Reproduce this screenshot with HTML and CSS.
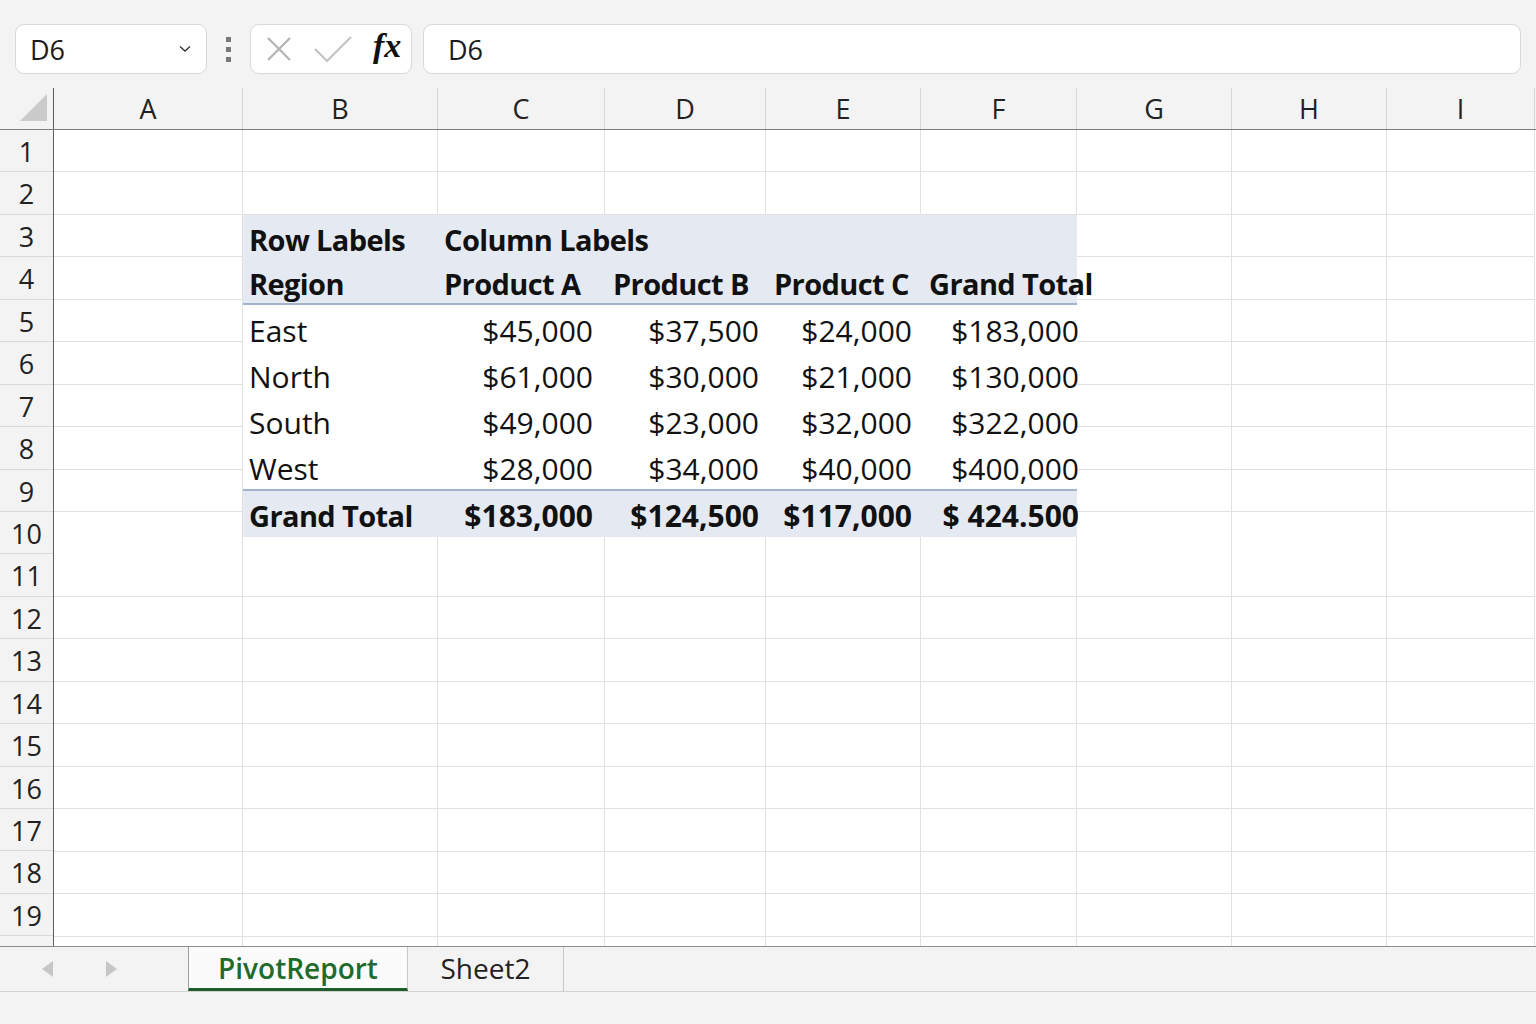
FILE: index.html
```html
<!DOCTYPE html>
<html lang="en">
<head>
  <meta charset="UTF-8">
  <title>PivotReport</title>
  <link rel="stylesheet" href="styles.css">
</head>
<body>
  <div class="toolbar">
    <div class="namebox">
      <span>D6</span>
      <svg class="chev" width="14" height="8" viewBox="0 0 14 8"><polyline points="2,1.5 7,6 12,1.5" fill="none" stroke="#333" stroke-width="1.4"/></svg>
    </div>
    <div class="grip"><i></i><i></i><i></i></div>
    <div class="fxbox">
      <svg width="24" height="24" viewBox="0 0 24 24"><path d="M1 1 L23 23 M23 1 L1 23" stroke="#b3b3b3" stroke-width="2.2" fill="none"/></svg>
      <svg width="40" height="28" viewBox="0 0 40 28"><polyline points="2,14 14,26 38,2" fill="none" stroke="#c4c4c4" stroke-width="2.2"/></svg>
      <span class="fx">fx</span>
    </div>
    <div class="formula">D6</div>
  </div>

  <div class="colheads">
    <div class="corner">
      <svg width="28" height="28" viewBox="0 0 28 28"><polygon points="0,27 27,0 27,27" fill="#cacaca"/></svg>
    </div>
    <div class="ch w-a">A</div>
    <div class="ch w-b">B</div>
    <div class="ch w-c">C</div>
    <div class="ch w-d">D</div>
    <div class="ch w-e">E</div>
    <div class="ch w-f">F</div>
    <div class="ch w-g">G</div>
    <div class="ch w-h">H</div>
    <div class="ch w-i">I</div>
  </div>

  <div class="sheet">
    <div class="rowheads">
      <div>1</div><div>2</div><div>3</div><div>4</div><div>5</div>
      <div>6</div><div>7</div><div>8</div><div>9</div><div>10</div>
      <div>11</div><div>12</div><div>13</div><div>14</div><div>15</div>
      <div>16</div><div>17</div><div>18</div><div>19</div><div></div>
    </div>
    <div class="cells">
      <div class="col w-a"></div>
      <div class="col w-b"></div>
      <div class="col w-c"></div>
      <div class="col w-d"></div>
      <div class="col w-e"></div>
      <div class="col w-f"></div>
      <div class="col w-g"></div>
      <div class="col w-h"></div>
      <div class="col w-i"></div>
    </div>

    <div class="pivot">
      <div class="pv-row head first">
        <div class="lbl">Row Labels</div>
        <div class="lbl span">Column Labels</div>
      </div>
      <div class="pv-row head second">
        <div class="lbl">Region</div>
        <div class="lbl">Product A</div>
        <div class="lbl pb">Product B</div>
        <div class="lbl pb">Product C</div>
        <div class="lbl pb">Grand Total</div>
      </div>
      <div class="pv-row">
        <div class="lbl">East</div>
        <div class="num n1">$45,000</div>
        <div class="num n2">$37,500</div>
        <div class="num n3">$24,000</div>
        <div class="num n4">$183,000</div>
      </div>
      <div class="pv-row">
        <div class="lbl">North</div>
        <div class="num n1">$61,000</div>
        <div class="num n2">$30,000</div>
        <div class="num n3">$21,000</div>
        <div class="num n4">$130,000</div>
      </div>
      <div class="pv-row">
        <div class="lbl">South</div>
        <div class="num n1">$49,000</div>
        <div class="num n2">$23,000</div>
        <div class="num n3">$32,000</div>
        <div class="num n4">$322,000</div>
      </div>
      <div class="pv-row">
        <div class="lbl">West</div>
        <div class="num n1">$28,000</div>
        <div class="num n2">$34,000</div>
        <div class="num n3">$40,000</div>
        <div class="num n4">$400,000</div>
      </div>
      <div class="pv-row total">
        <div class="lbl">Grand Total</div>
        <div class="num n1">$183,000</div>
        <div class="num n2">$124,500</div>
        <div class="num n3">$117,000</div>
        <div class="num n4">$ 424.500</div>
      </div>
    </div>
  </div>

  <div class="tabs">
    <div class="nav">
      <svg width="12" height="16" viewBox="0 0 12 16"><polygon points="11,0 11,16 0,8" fill="#c6c6c6"/></svg>
      <svg width="12" height="16" viewBox="0 0 12 16"><polygon points="1,0 1,16 12,8" fill="#c6c6c6"/></svg>
    </div>
    <div class="tab active">PivotReport</div>
    <div class="tab">Sheet2</div>
  </div>
  <div class="status"></div>
</body>
</html>
```

FILE: styles.css
```css
* {
  box-sizing: border-box;
}
body {
  margin: 0;
  height: 1024px;
  overflow: hidden;
  background-color: #f3f3f3;
  font-family: "Open Sans", "Noto Sans", sans-serif;
  color: #1a1a1a;
}

/* formula bar */
.toolbar {
  height: 88px;
  display: flex;
  align-items: flex-start;
  padding: 24px 0 0 15px;
  background: #f3f3f3;
}
.namebox {
  width: 192px;
  height: 50px;
  background: white;
  border: 1px solid #d9d9d9;
  border-radius: 9px;
  display: flex;
  align-items: center;
  justify-content: space-between;
  padding: 0 14px 0 14px;
  font-size: 27px;
}
.grip {
  width: 43px;
  height: 50px;
  display: flex;
  flex-direction: column;
  align-items: center;
  justify-content: center;
  gap: 5px;
}
.grip i {
  display: block;
  width: 5px;
  height: 5px;
  background: #787878;
}
.fxbox {
  width: 162px;
  height: 50px;
  background: white;
  border: 1px solid #d9d9d9;
  border-radius: 9px;
  display: flex;
  align-items: center;
  padding: 0 0 0 16px;
  gap: 22px;
}
.fx {
  font-family: "Liberation Serif", "DejaVu Serif", serif;
  font-style: italic;
  font-weight: bold;
  font-size: 34px;
  color: #111;
  margin-left: -2px;
  margin-top: -6px;
}
.formula {
  margin-left: 11px;
  width: 1098px;
  height: 50px;
  background: white;
  border: 1px solid #d9d9d9;
  border-radius: 9px;
  display: flex;
  align-items: center;
  padding-left: 24px;
  font-size: 27px;
}

/* column headers */
.colheads {
  height: 42px;
  display: flex;
  border-bottom: 1px solid #7d7d7d;
  background: #f3f3f3;
}
.corner {
  width: 54px;
  flex: none;
  border-right: 1px solid #5e5e5e;
  display: flex;
  align-items: flex-end;
  justify-content: flex-end;
  padding: 0 5px 7px 0;
}
.ch {
  flex: none;
  border-right: 1px solid #d6d6d6;
  text-align: center;
  font-size: 27px;
  line-height: 41px;
  color: #222;
}
.w-a { width: 189px; }
.w-b { width: 195px; }
.w-c { width: 167px; }
.w-d { width: 161px; }
.w-e { width: 155px; }
.w-f { width: 156px; }
.w-g { width: 155px; }
.w-h { width: 155px; }
.w-i { width: 148px; }

/* grid */
.sheet {
  position: relative;
  height: 816px;
  display: flex;
  overflow: hidden;
  background: white;
}
.rowheads {
  width: 54px;
  flex: none;
  background: #f3f3f3;
  border-right: 1px solid #5e5e5e;
}
.rowheads div {
  height: 42.45px;
  border-bottom: 1px solid #d9d9d9;
  text-align: center;
  font-size: 27px;
  line-height: 44px;
  color: #222;
}
.cells {
  display: flex;
  flex: 1;
}
.col {
  flex: none;
  height: 100%;
  border-right: 1px solid #e1e1e1;
  background: repeating-linear-gradient(to bottom, transparent 0, transparent 41.45px, #e1e1e1 41.45px, #e1e1e1 42.45px);
}

/* pivot table, laid over the grid */
.pivot {
  position: absolute;
  left: 243px;
  top: 85px;
  width: 834px;
  background: white;
  font-size: 30px;
  color: #111;
}
.pv-row {
  display: grid;
  grid-template-columns: 195px 167px 161px 155px 156px;
  height: 46px;
  align-items: center;
  white-space: nowrap;
  padding-top: 4px;
}
.pv-row.head {
  background: #e5e9f1;
  font-weight: bold;
  font-size: 29px;
  letter-spacing: -0.6px;
  height: 45px;
}
.pv-row.second {
  border-bottom: 2px solid #a3b3cb;
}
.pv-row.total {
  background: #e5e9f1;
  font-weight: bold;
  font-size: 29px;
  letter-spacing: -0.6px;
  border-top: 2px solid #a3b3cb;
  height: 48px;
  padding-top: 2px;
}
.pv-row.total .num {
  font-size: 30px;
  letter-spacing: 0;
}
.lbl {
  padding-left: 6px;
}
.lbl.pb {
  padding-left: 8px;
}
.lbl.span {
  grid-column: 2 / 6;
}
.num {
  text-align: right;
}
.n1 { padding-right: 12px; }
.n2 { padding-right: 7px; }
.n3 { padding-right: 9px; }
.n4 { margin-right: -2px; }

/* sheet tabs */
.tabs {
  height: 46px;
  display: flex;
  border-top: 1px solid #8c8c8c;
  border-bottom: 1px solid #d2d2d2;
  background: #f3f3f3;
}
.nav {
  width: 188px;
  display: flex;
  align-items: center;
  gap: 51px;
  padding-left: 42px;
}
.tab {
  height: 100%;
  display: flex;
  align-items: center;
  justify-content: center;
  border-right: 1px solid #c8c8c8;
  font-size: 28px;
  color: #222;
  width: 156px;
  padding-bottom: 3px;
}
.tab.active {
  width: 220px;
  background: #fbfbfb;
  border-left: 1px solid #a0a0a0;
  border-bottom: 3px solid #1d5f2a;
  color: #1e6b2b;
  font-weight: 600;
  padding-bottom: 0;
}
.status {
  height: 32px;
  background: #f3f3f3;
}
```
